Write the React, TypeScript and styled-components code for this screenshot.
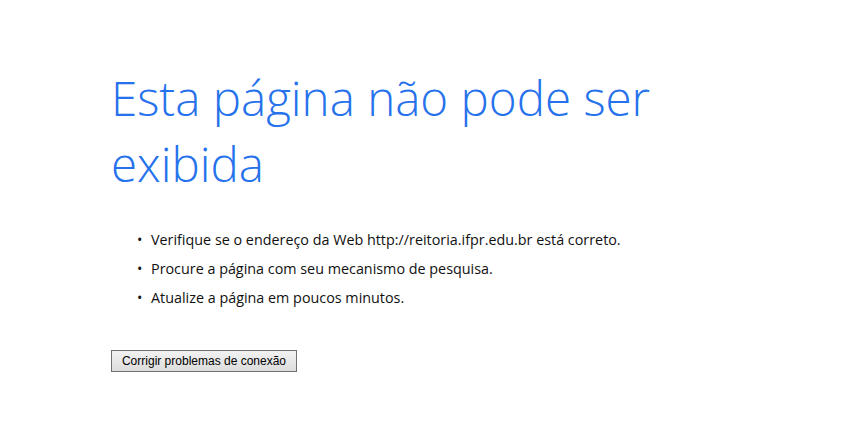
import styled, { createGlobalStyle } from 'styled-components';

const GlobalStyle = createGlobalStyle`
  html, body {
    margin: 0;
    padding: 0;
    background: #ffffff;
  }
`;

const Page = styled.div`
  width: 854px;
  height: 428px;
  box-sizing: border-box;
  padding: 65px 0 0 111px;
  background: #fff;
`;

const Title = styled.h1`
  margin: 0;
  width: 580px;
  font-family: "Open Sans", "Segoe UI Light", sans-serif;
  font-weight: 300;
  font-size: 47.5px;
  line-height: 66px;
  color: #2672ec;
`;

const Tips = styled.ul`
  margin: 28px 0 0 0;
  padding: 0 0 0 40px;
  list-style: none;
`;

const Tip = styled.li`
  position: relative;
  font-family: "Open Sans", "Segoe UI", sans-serif;
  font-size: 14.35px;
  line-height: 29px;
  color: #111;

  &::before {
    content: "•";
    position: absolute;
    left: -14px;
  }
`;

const FixButton = styled.button`
  margin-top: 38px;
  width: 186px;
  height: 22px;
  padding: 0;
  border: 1px solid #707070;
  border-radius: 0;
  background: linear-gradient(#f2f2f2, #dcdcdc);
  font-family: Arial, "Liberation Sans", sans-serif;
  font-size: 12px;
  color: #000;
`;

const tips = [
  'Verifique se o endereço da Web http://reitoria.ifpr.edu.br está correto.',
  'Procure a página com seu mecanismo de pesquisa.',
  'Atualize a página em poucos minutos.',
];

export default function App() {
  return (
    <>
      <GlobalStyle />
      <Page>
        <Title>Esta página não pode ser exibida</Title>
        <Tips>
          {tips.map((t) => (
            <Tip key={t}>{t}</Tip>
          ))}
        </Tips>
        <FixButton>Corrigir problemas de conexão</FixButton>
      </Page>
    </>
  );
}
